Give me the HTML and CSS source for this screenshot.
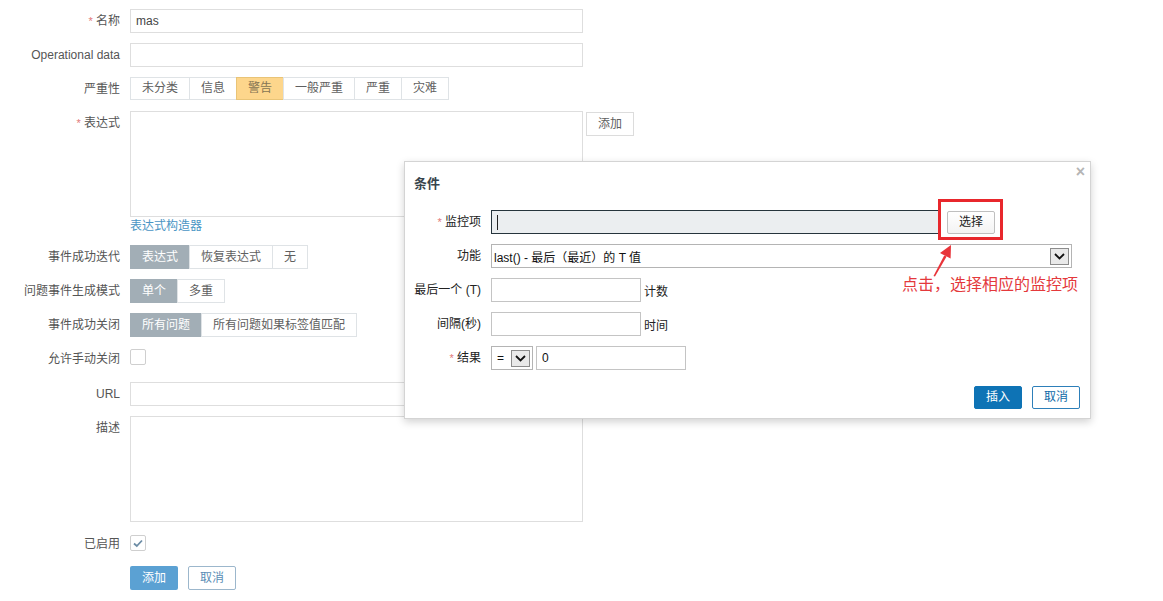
FILE: index.html
```html
<!DOCTYPE html>
<html lang="zh-CN">
<head>
<meta charset="utf-8">
<title>触发器</title>
<link rel="stylesheet" href="styles.css">
</head>
<body>
<div class="form">
  <div class="row">
    <div class="lbl"><span class="req">*</span> 名称</div>
    <div class="inp">mas</div>
  </div>
  <div class="row">
    <div class="lbl">Operational data</div>
    <div class="inp"></div>
  </div>
  <div class="row">
    <div class="lbl">严重性</div>
    <div class="seg sev">
      <span>未分类</span><span>信息</span><span class="warn">警告</span><span>一般严重</span><span>严重</span><span>灾难</span>
    </div>
  </div>
  <div class="row">
    <div class="lbl"><span class="req">*</span> 表达式</div>
    <div class="field">
      <div class="area"></div>
      <div class="link">表达式构造器</div>
    </div>
    <div class="btn-alt add">添加</div>
  </div>
  <div class="row">
    <div class="lbl">事件成功迭代</div>
    <div class="seg">
      <span class="on">表达式</span><span>恢复表达式</span><span>无</span>
    </div>
  </div>
  <div class="row">
    <div class="lbl">问题事件生成模式</div>
    <div class="seg">
      <span class="on">单个</span><span>多重</span>
    </div>
  </div>
  <div class="row">
    <div class="lbl">事件成功关闭</div>
    <div class="seg">
      <span class="on">所有问题</span><span>所有问题如果标签值匹配</span>
    </div>
  </div>
  <div class="row">
    <div class="lbl">允许手动关闭</div>
    <div class="chk-wrap first"><div class="chk"></div></div>
  </div>
  <div class="row">
    <div class="lbl">URL</div>
    <div class="inp"></div>
  </div>
  <div class="row">
    <div class="lbl">描述</div>
    <div class="area"></div>
  </div>
  <div class="row">
    <div class="lbl">已启用</div>
    <div class="chk-wrap second">
      <div class="chk">
        <svg width="14" height="14" viewBox="0 0 14 14"><polyline points="3,7.5 5.8,10 11,4.5" fill="none" stroke="#6d8da6" stroke-width="1.8"/></svg>
      </div>
    </div>
  </div>
  <div class="row actions">
    <div class="btn-main">添加</div>
    <div class="btn-cancel">取消</div>
  </div>
</div>

<div class="modal">
  <div class="close">×</div>
  <div class="mtitle">条件</div>
  <div class="mform">
    <div class="mrow">
      <div class="mlbl"><span class="req">*</span> 监控项</div>
      <div class="mitem"><span class="caret"></span></div>
      <div class="choose">选择</div>
    </div>
    <div class="mrow">
      <div class="mlbl">功能</div>
      <div class="msel wide">
        <span>last() - 最后（最近）的 T 值</span>
        <span class="arrow"><svg width="11" height="7" viewBox="0 0 11 7"><polyline points="1,1 5.5,5.5 10,1" fill="none" stroke="#111" stroke-width="1.8"/></svg></span>
      </div>
    </div>
    <div class="mrow">
      <div class="mlbl">最后一个 (T)</div>
      <div class="minp"></div>
      <div class="suffix">计数</div>
    </div>
    <div class="mrow">
      <div class="mlbl">间隔(秒)</div>
      <div class="minp"></div>
      <div class="suffix">时间</div>
    </div>
    <div class="mrow">
      <div class="mlbl"><span class="req">*</span> 结果</div>
      <div class="msel small">
        <span>=</span>
        <span class="arrow"><svg width="11" height="7" viewBox="0 0 11 7"><polyline points="1,1 5.5,5.5 10,1" fill="none" stroke="#111" stroke-width="1.8"/></svg></span>
      </div>
      <div class="minp result">0</div>
    </div>
  </div>
  <div class="mfoot">
    <div class="mbtn primary">插入</div>
    <div class="mbtn ghost">取消</div>
  </div>
  <div class="redbox"></div>
  <svg class="redarrow" width="30" height="40" viewBox="0 0 30 40">
    <path d="M7.5 35 L9 35.6 L20.6 15.6 L18.2 14.4 Z" fill="#e8343a"/>
    <polygon points="25,4 24.6,17.6 14,12" fill="#e8343a"/>
  </svg>
  <div class="note">点击，选择相应的监控项</div>
</div>
</body>
</html>
```
FILE: styles.css
```css
body {
  margin: 0;
  background: #ffffff;
  font-family: "Liberation Sans", Arial, "Noto Sans CJK SC", sans-serif;
  font-size: 12px;
  color: #4a4a4a;
}

.form {
  display: flex;
  flex-direction: column;
  gap: 10px;
  padding-top: 9px;
}

.row {
  display: flex;
  align-items: flex-start;
}

.lbl {
  width: 130px;
  box-sizing: border-box;
  padding-right: 10px;
  text-align: right;
  line-height: 24px;
  color: #555555;
  white-space: nowrap;
}

.req {
  color: #e27a7a;
  font-size: 11px;
}

.inp {
  width: 453px;
  height: 24px;
  box-sizing: border-box;
  border: 1px solid #dedede;
  padding: 0 5px;
  line-height: 22px;
  color: #444;
}

.area {
  width: 453px;
  height: 106px;
  box-sizing: border-box;
  border: 1px solid #dedede;
}

.field {
  display: flex;
  flex-direction: column;
}

.link {
  color: #4a95c4;
  line-height: 16px;
  margin-top: 1px;
  margin-bottom: 1px;
}

.btn-alt {
  height: 24px;
  box-sizing: border-box;
  border: 1px solid #dcdcdc;
  padding: 0 10px;
  line-height: 22px;
  color: #606060;
  background: #fff;
}

.add {
  margin-left: 3px;
  margin-top: 1px;
  width: 48px;
  text-align: center;
  padding: 0;
}

.seg {
  display: flex;
  padding-left: 1px;
}

.seg span {
  height: 24px;
  box-sizing: border-box;
  border: 1px solid #dfe3e6;
  margin-left: -1px;
  padding: 0 11px;
  line-height: 22px;
  color: #606060;
  background: #fff;
  white-space: nowrap;
}

.sev span {
  height: 23px;
  line-height: 21px;
}

.seg span.warn {
  background: #fdd68c;
  border-color: #e9c477;
  color: #867554;
}

.seg span.on {
  background: #a2aeb6;
  border-color: #a2aeb6;
  color: #ffffff;
}

.chk-wrap {
  display: flex;
  align-items: flex-start;
}

.chk-wrap.first {
  height: 25px;
  padding-top: 2px;
  box-sizing: border-box;
}

.chk-wrap.second {
  height: 24px;
  padding-top: 3px;
  box-sizing: border-box;
}

.chk {
  width: 16px;
  height: 16px;
  box-sizing: border-box;
  border: 1px solid #cfcfcf;
  border-radius: 2px;
  display: flex;
  align-items: center;
  justify-content: center;
}

.actions {
  padding-left: 130px;
  gap: 10px;
}

.btn-main {
  width: 48px;
  height: 24px;
  box-sizing: border-box;
  border-radius: 2px;
  background: #5ba1d3;
  color: #fff;
  text-align: center;
  line-height: 24px;
}

.btn-cancel {
  width: 48px;
  height: 24px;
  box-sizing: border-box;
  border: 1px solid #9cb7cc;
  border-radius: 2px;
  color: #5a8db5;
  text-align: center;
  line-height: 22px;
}

/* ---- modal ---- */
.modal {
  position: absolute;
  left: 404px;
  top: 161px;
  width: 687px;
  box-sizing: border-box;
  border: 1px solid #d4d4d4;
  background: #ffffff;
  box-shadow: 0 3px 8px rgba(0, 0, 0, 0.18);
  color: #1f1f1f;
  padding-bottom: 9px;
}

.close {
  position: absolute;
  top: 1px;
  right: 5px;
  font-size: 16px;
  font-weight: bold;
  color: #b5b5b5;
  line-height: 18px;
}

.mtitle {
  padding: 13px 0 0 9px;
  line-height: 18px;
  font-size: 13px;
  font-weight: bold;
  color: #37444c;
}

.mform {
  margin-top: 17px;
  display: flex;
  flex-direction: column;
  gap: 10px;
}

.mrow {
  display: flex;
  align-items: center;
}

.mlbl {
  width: 86px;
  box-sizing: border-box;
  padding-right: 10px;
  text-align: right;
  line-height: 24px;
  color: #222;
  white-space: nowrap;
}

.mitem {
  width: 449px;
  height: 24px;
  box-sizing: border-box;
  border: 1px solid #26343c;
  background: #ebeef0;
  display: flex;
  align-items: center;
  padding-left: 5px;
}

.caret {
  width: 1px;
  height: 15px;
  background: #222;
}

.choose {
  margin-left: 7px;
  width: 48px;
  height: 23px;
  box-sizing: border-box;
  border: 1px solid #bfbfbf;
  border-radius: 2px;
  background: linear-gradient(#ffffff, #f3f3f3);
  text-align: center;
  line-height: 21px;
  color: #222;
}

.msel {
  height: 24px;
  box-sizing: border-box;
  border: 1px solid #b4b4b4;
  display: flex;
  align-items: center;
  justify-content: space-between;
  padding: 0 2px 0 2px;
  color: #111;
  background: #fff;
}

.msel.wide {
  width: 581px;
}

.msel.small {
  width: 42px;
  padding-left: 5px;
}

.arrow {
  width: 19px;
  height: 17px;
  box-sizing: border-box;
  border: 1px solid #8c8c8c;
  background: #e9e9e9;
  display: flex;
  align-items: center;
  justify-content: center;
}

.minp {
  width: 150px;
  height: 24px;
  box-sizing: border-box;
  border: 1px solid #c4c4c4;
  padding: 0 5px;
  line-height: 22px;
  color: #111;
}

.minp.result {
  margin-left: 3px;
}

.suffix {
  margin-left: 3px;
  color: #222;
}

.mfoot {
  margin-top: 16px;
  display: flex;
  justify-content: flex-end;
  gap: 10px;
  padding-right: 10px;
}

.mbtn {
  width: 48px;
  height: 23px;
  box-sizing: border-box;
  border-radius: 2px;
  text-align: center;
  line-height: 21px;
}

.mbtn.primary {
  background: #0e73b5;
  border: 1px solid #0e73b5;
  color: #fff;
}

.mbtn.ghost {
  border: 1px solid #2d7fb9;
  color: #0e6aa8;
  background: #fff;
}

/* annotation overlay */
.redbox {
  position: absolute;
  left: 533px;
  top: 37px;
  width: 65px;
  height: 41px;
  box-sizing: border-box;
  border: 3px solid #e8272c;
}

.redarrow {
  position: absolute;
  left: 521px;
  top: 79px;
}

.note {
  position: absolute;
  left: 497px;
  top: 110px;
  font-family: "Noto Sans CJK SC", sans-serif;
  font-size: 16px;
  line-height: 22px;
  color: #e4393c;
  white-space: nowrap;
}
```
